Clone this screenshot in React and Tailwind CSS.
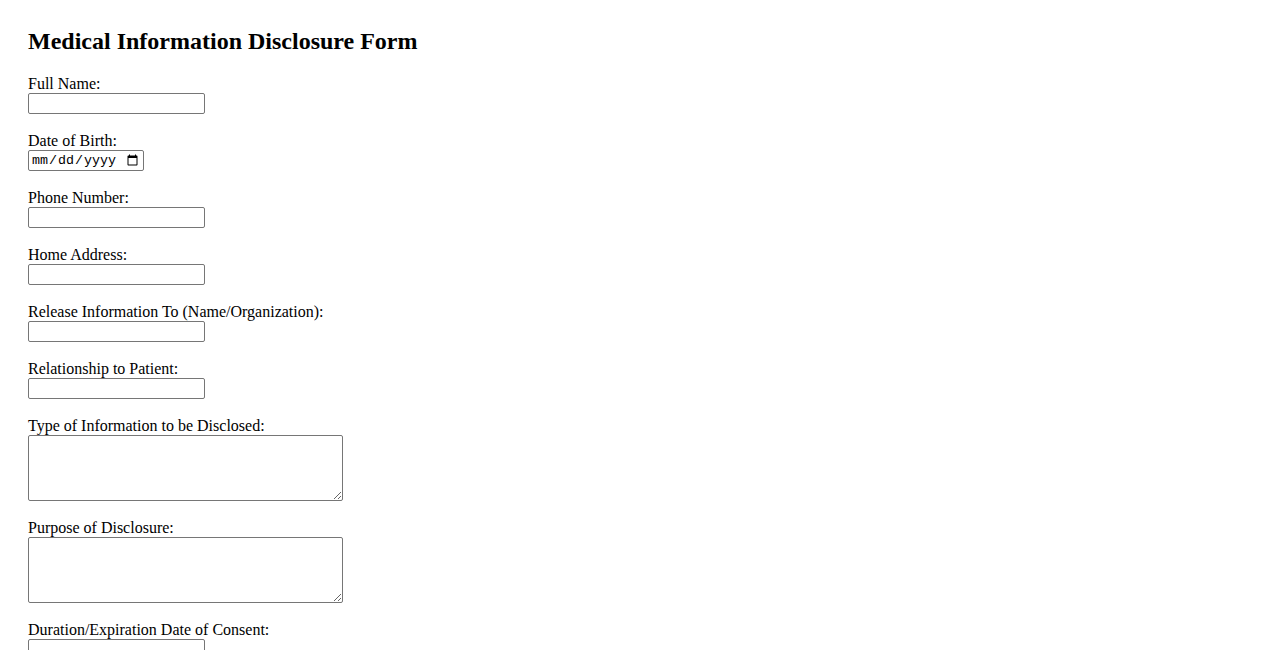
const fields = [
  { id: 'fullName', label: 'Full Name:', type: 'text' },
  { id: 'dob', label: 'Date of Birth:', type: 'date' },
  { id: 'phone', label: 'Phone Number:', type: 'tel' },
  { id: 'address', label: 'Home Address:', type: 'text' },
  { id: 'releaseTo', label: 'Release Information To (Name/Organization):', type: 'text' },
  { id: 'relationship', label: 'Relationship to Patient:', type: 'text' },
  { id: 'infoType', label: 'Type of Information to be Disclosed:', type: 'textarea' },
  { id: 'purpose', label: 'Purpose of Disclosure:', type: 'textarea' },
  { id: 'duration', label: 'Duration/Expiration Date of Consent:', type: 'text' },
  { id: 'signature', label: 'Signature:', type: 'text' },
  { id: 'signedOn', label: 'Date:', type: 'date' },
];

function Field({ field }) {
  const base = 'block border border-[#767676] rounded-[2px] bg-white text-black outline-none';

  let control;
  if (field.type === 'textarea') {
    control = <textarea id={field.id} className={`${base} w-[315px] h-[66px] p-[2px] text-[13.33px] font-['Liberation_Mono',monospace] resize`} />;
  } else if (field.type === 'date') {
    control = (
      <input
        id={field.id}
        type="date"
        className={`${base} w-[116px] h-[21px] px-[2px] py-px text-[13.33px] font-['Liberation_Mono',monospace]`}
      />
    );
  } else {
    control = (
      <input
        id={field.id}
        type={field.type}
        className={`${base} w-[177px] h-[21px] px-[2px] py-px text-[13.33px] font-['Liberation_Sans',Arial,sans-serif]`}
      />
    );
  }

  return (
    <div className="flex flex-col items-start mb-[18px]">
      <label htmlFor={field.id} className="block h-[18px] leading-[18px]">{field.label}</label>
      {control}
    </div>
  );
}

export default function App() {
  return (
    <div className="min-h-screen bg-white text-black font-['Liberation_Serif','Times_New_Roman',serif] text-[16px] px-[28px] pt-[28px] pb-8">
      <h2 className="text-[24px] font-bold leading-[normal] mb-[20px]">Medical Information Disclosure Form</h2>
      <form onSubmit={e => e.preventDefault()}>
        {fields.map(f => <Field key={f.id} field={f} />)}
        <button type="submit" className="border border-[#767676] rounded-[2px] bg-[#efefef] px-[6px] py-px text-[13.33px] font-['Liberation_Sans',Arial,sans-serif]">
          Submit
        </button>
      </form>
    </div>
  );
}
